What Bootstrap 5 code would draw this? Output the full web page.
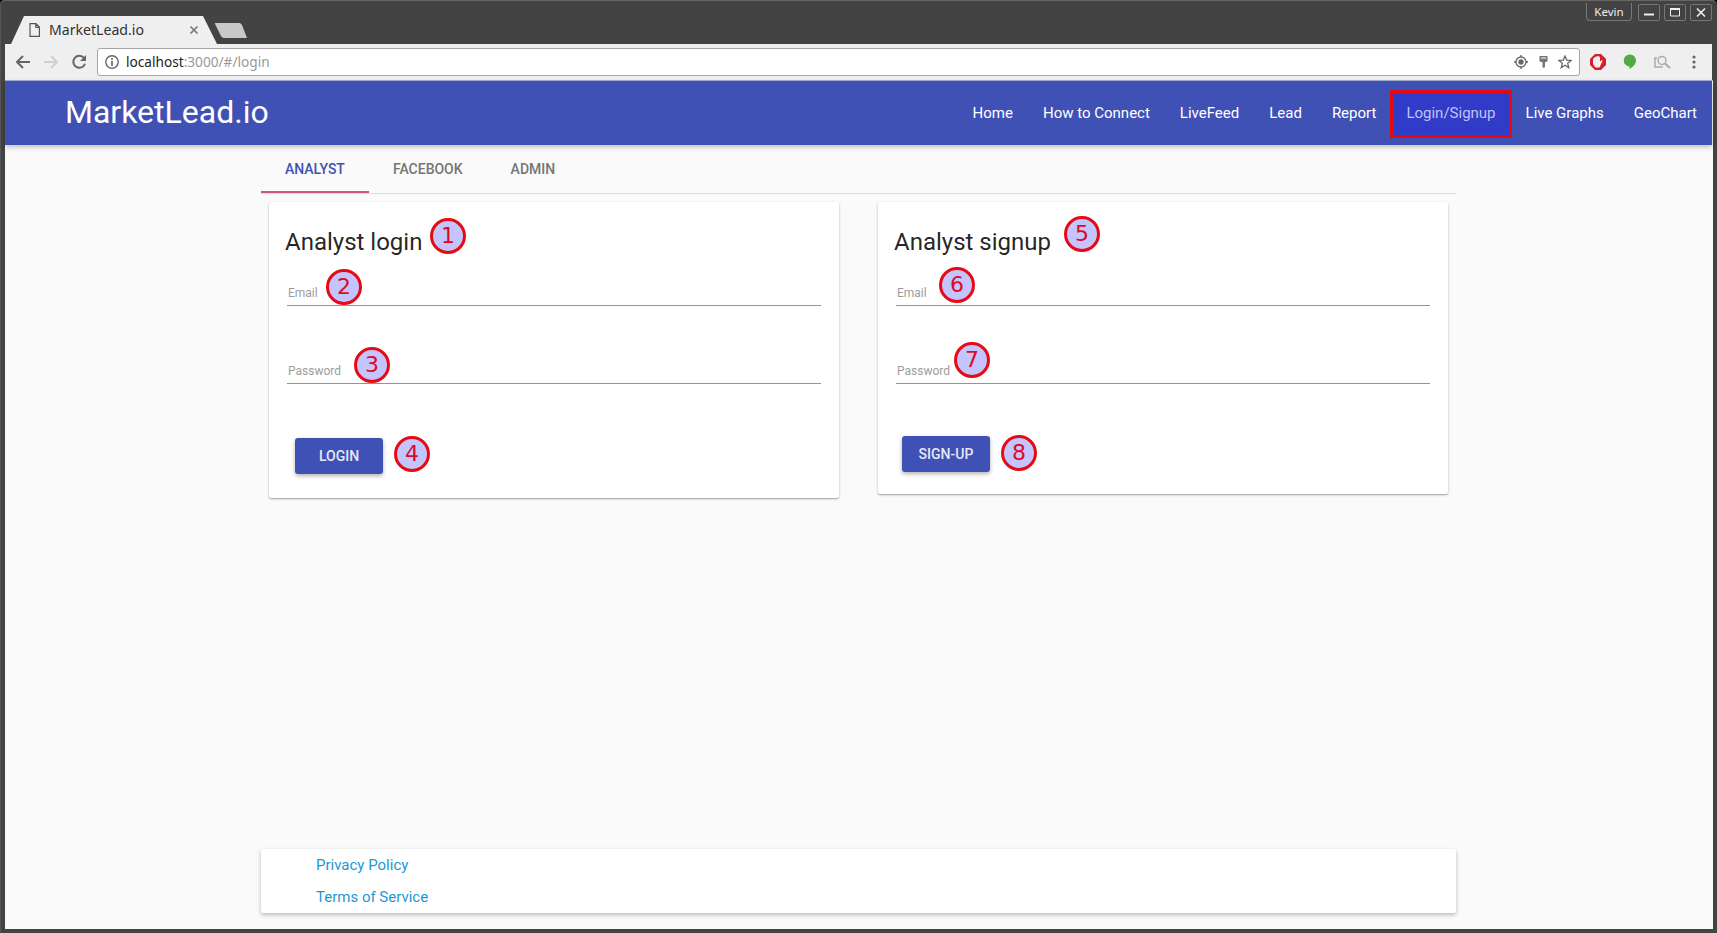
<!DOCTYPE html>
<html lang="en">
<head>
<meta charset="utf-8">
<title>MarketLead.io</title>
<link rel="stylesheet" href="https://cdn.jsdelivr.net/npm/bootstrap@5.3.0/dist/css/bootstrap.min.css">
<style>
  body { font-family: Roboto, sans-serif; font-size: 15px; line-height: 1.5; color: rgba(0,0,0,.87); background: #000; }
  svg { display: block; flex: none; }
  .win { height: 933px; padding: 0 5px 4px; background: #434343; border-radius: 5px 5px 0 0; box-shadow: inset 0 2px 0 -1px #666, inset 1px 0 #555; }
  .win-title { height: 44px; font-family: "Noto Sans", sans-serif; }
  .win-tab { width: 206px; height: 44px; margin-left: 6px; }
  .win-tab-shape, .win-tab-body { position: absolute; left: 0; top: 0; }
  .win-tab-body { width: 206px; height: 28px; top: 16px; padding: 0 18px 0 18px; font-size: 14.1px; color: #333; }
  .win-tab-body span { line-height: 28px; height: 28px; }
  .win-user { width: 46px; height: 18px; margin: 3px 6px 0 0; border: 1px solid #777; border-top: 0; border-radius: 0 0 4px 4px; font-size: 11.5px; line-height: 17px; color: #eee; text-align: center; }
  .win-btn { width: 22px; height: 17px; margin: 4px 4px 0 0; border: 1px solid #777; border-radius: 2px; }
  .toolbar { height: 36px; background: #efefef; padding: 0 7px 0 10px; font-family: "Noto Sans", sans-serif; }
  .urlbar { width: 1483px; height: 28px; margin-left: 10px; border: 1px solid #a6a6a6; border-radius: 3px; background: #fff; font-size: 13.65px; color: #999; padding: 0 7px 0 7px; }
  .urlbar span { line-height: 26px; height: 26px; }
  .urlbar b { font-weight: 400; color: #222; }
  .page { height: 849px; margin-right: -1px; background: #fafafa; border-top: 1px solid #a9b3d6; }
  .site-nav { height: 64px; background: #3f51b5; padding: 0; margin-right: 1px; box-shadow: 0 2px 5px rgba(0,0,0,.24); z-index: 2; }
  .site-nav .navbar-brand { color: #fff; font-size: 32px; line-height: 62px; padding: 0 0 2px; margin: 0 0 0 60px; }
  .site-nav .navbar-nav .nav-link { color: #fff; padding: 0 15px; line-height: 64px; font-size: 15px; position: relative; white-space: nowrap; }
  .site-nav .navbar-nav .nav-link.active { color: #c2c2f6; }
  .hilite { position: absolute; left: -1px; right: -1px; top: 9px; height: 48px; border: 3.5px solid #e40a12; background: #303cc8; }
  .main-col { width: 1195px; margin-left: 256px; }
  .tabbar { height: 49px; border-bottom: 1px solid #dcdcdc; padding: 0; flex-wrap: nowrap; }
  .tabbar .nav-link { height: 48px; padding: 0 24px; line-height: 48px; font-size: 14px; font-weight: 500; color: #757575; text-transform: uppercase; border-radius: 0; }
  .tabbar .nav-link.active { color: #3f51b5; border-bottom: 2px solid #cb5685; }
  .form-card { width: 570px; border: 0; border-radius: 2px; box-shadow: 0 1px 3px rgba(0,0,0,.2), 0 1px 1px rgba(0,0,0,.2); padding: 0 18px; }
  .form-card h2 { margin: 24px 0 0 -2px; font-size: 24px; font-weight: 400; line-height: 32px; }
  .field { border-bottom: 1px solid #949494; height: 46px; padding: 24px 0 0 1px; font-size: 12px; line-height: 18px; color: #9c9c9c; }
  h2 + .field { margin-top: 2px; }
  .field + .field { margin-top: 32px; }
  .mat-btn { width: 88px; height: 36px; padding: 0; border: 0; border-radius: 3px; background: #3f51b5; color: #e6e8f6; font-size: 14px; font-weight: 500; line-height: 36px; box-shadow: 0 2px 4px rgba(0,0,0,.3); }
  .step { position: absolute; width: 36px; height: 36px; border: 3px solid #e60a14; border-radius: 50%; background: #c4c4ff; color: #dc0a24; font: 22px/29px "DejaVu Sans", sans-serif; text-align: center; }
  .foot-card { height: 64px; border: 0; border-radius: 2px; box-shadow: 0 2px 4px rgba(0,0,0,.26); padding-left: 55px; }
  .foot-card a { color: #1c98d2; text-decoration: none; line-height: 32px; }
</style>
</head>
<body>
<div class="win">
  <div class="win-title d-flex">
    <div class="win-tab position-relative">
      <svg class="win-tab-shape" width="240" height="44"><path d="M0 44L13 16H192L206 44z" fill="#efefef"/><path d="M204 24Q203 23 205 23H228Q230 23 231 25L236 38H213Q211 38 210 36z" fill="#c8c8c8"/></svg>
      <div class="win-tab-body d-flex align-items-center">
        <svg class="me-2" width="12" height="14" fill="none" stroke="#555" stroke-width="1.2"><path d="M1 .7H7L10.4 4V13.3H1zM6.8 1V4.3H10.4"/></svg>
        <span>MarketLead.io</span>
        <svg class="ms-auto" width="10" height="10" stroke="#777" stroke-width="1.7"><path d="M1.5 1.5L8.5 8.5M8.5 1.5L1.5 8.5"/></svg>
      </div>
    </div>
    <div class="win-user ms-auto">Kevin</div>
    <div class="win-btn"><svg width="20" height="15"><path d="M5 9.5H15" stroke="#eee" stroke-width="2"/></svg></div>
    <div class="win-btn"><svg width="20" height="15" fill="none" stroke="#eee"><path d="M5.5 3.5H14.5V11H5.5z"/><path d="M5 4H15" stroke-width="2"/></svg></div>
    <div class="win-btn me-0"><svg width="20" height="15"><path d="M6 3.5L14 11.5M14 3.5L6 11.5" stroke="#eee" stroke-width="1.6"/></svg></div>
  </div>
  <div class="toolbar d-flex align-items-center">
    <svg width="16" height="16" fill="none" stroke="#666" stroke-width="2"><path d="M15 8H2M8 2L2 8L8 14"/></svg>
    <svg style="margin-left:12px" width="16" height="16" fill="none" stroke="#d0d0d0" stroke-width="2"><path d="M1 8H14M8 2L14 8L8 14"/></svg>
    <svg style="margin-left:12px" width="16" height="16"><path d="M13 4A6 6 0 1 0 14 9.7" fill="none" stroke="#666" stroke-width="2"/><path d="M15 1V7H9z" fill="#666"/></svg>
    <div class="urlbar d-flex align-items-center">
      <svg style="margin-right:7px" width="14" height="14"><circle cx="7" cy="7" r="6.2" fill="none" stroke="#666" stroke-width="1.4"/><path d="M7 6V11M7 3V4.8" stroke="#666" stroke-width="1.7"/></svg>
      <span><b>localhost</b>:3000/#/login</span>
      <svg class="ms-auto" width="14" height="14" stroke="#666" stroke-width="1.3"><circle cx="7" cy="7" r="5" fill="none"/><circle cx="7" cy="7" r="2" fill="#666"/><path d="M7 0V2M7 12V14M0 7H2M12 7H14"/></svg>
      <svg style="margin-left:11px" width="9" height="14"><path d="M.5 1H8.5V6L7.5 7H6V12L4.5 13L3.5 12V7H1.5L.5 6z" fill="#777"/><path d="M2 3H7" stroke="#fff"/></svg>
      <svg style="margin-left:10px" width="14" height="14"><path d="M7 1L8.7 5.1L13.2 5.4L9.7 8.3L10.8 12.7L7 10.3L3.2 12.7L4.3 8.3L.8 5.4L5.3 5.1z" fill="none" stroke="#666" stroke-width="1.3"/></svg>
    </div>
    <svg style="margin-left:10px" width="16" height="16"><path d="M5 0H11L16 5V11L11 16H5L0 11V5z" fill="#d4202a"/><path d="M5.5 13.5L3 10V5L5 3L8 2L10 3V7.5L12 6L12.5 7L9.5 13.5z" fill="#f4eeee"/></svg>
    <svg style="margin-left:17px" width="14" height="16"><path d="M7 .5A6 6 0 0 1 13 6.5C13 10 10 13 6.5 15V12.5A6 6 0 0 1 7 .5z" fill="#4fab42"/></svg>
    <svg style="margin-left:17px" width="18" height="14" fill="none" stroke="#aaa" stroke-width="1.5"><path d="M3 3H1V12H9"/><circle cx="8" cy="5.5" r="4"/><path d="M11 8.5L16 13" stroke-width="2"/></svg>
    <svg class="ms-auto" style="margin-right:9px" width="4" height="14" fill="#666"><circle cx="2" cy="2" r="1.6"/><circle cx="2" cy="7" r="1.6"/><circle cx="2" cy="12" r="1.6"/></svg>
  </div>
  <div class="page">
    <nav class="site-nav navbar navbar-expand position-relative flex-nowrap">
      <a class="navbar-brand" href="#">MarketLead.io</a>
      <div class="navbar-nav ms-auto">
        <a class="nav-link" href="#">Home</a>
        <a class="nav-link" href="#">How to Connect</a>
        <a class="nav-link" href="#">LiveFeed</a>
        <a class="nav-link" href="#">Lead</a>
        <a class="nav-link" href="#">Report</a>
        <a class="nav-link active" href="#"><span class="hilite"></span><span class="position-relative">Login/Signup</span></a>
        <a class="nav-link" href="#">Live Graphs</a>
        <a class="nav-link" href="#">GeoChart</a>
      </div>
    </nav>
    <main class="main-col">
      <div class="tabbar nav">
        <a class="nav-link active" href="#">Analyst</a>
        <a class="nav-link" href="#">Facebook</a>
        <a class="nav-link" href="#">Admin</a>
      </div>
      <div class="d-flex justify-content-between align-items-start px-2 pt-2" style="height:655px">
        <section class="form-card card" style="height:296px">
          <h2>Analyst login</h2>
          <div class="field">Email</div>
          <div class="field">Password</div>
          <button class="mat-btn btn" style="margin:54px 0 0 8px">LOGIN</button>
          <span class="step" style="left:161px;top:16px">1</span>
          <span class="step" style="left:57px;top:67px">2</span>
          <span class="step" style="left:85px;top:145px">3</span>
          <span class="step" style="left:125px;top:234px">4</span>
        </section>
        <section class="form-card card" style="height:292px">
          <h2>Analyst signup</h2>
          <div class="field">Email</div>
          <div class="field">Password</div>
          <button class="mat-btn btn" style="margin:52px 0 0 6px">SIGN-UP</button>
          <span class="step" style="left:186px;top:14px">5</span>
          <span class="step" style="left:61px;top:65px">6</span>
          <span class="step" style="left:76px;top:140px">7</span>
          <span class="step" style="left:123px;top:233px">8</span>
        </section>
      </div>
      <footer class="foot-card card"><a href="#">Privacy Policy</a><a href="#">Terms of Service</a></footer>
    </main>
  </div>
</div>
<script src="https://cdn.jsdelivr.net/npm/bootstrap@5.3.0/dist/js/bootstrap.bundle.min.js"></script>
</body>
</html>
